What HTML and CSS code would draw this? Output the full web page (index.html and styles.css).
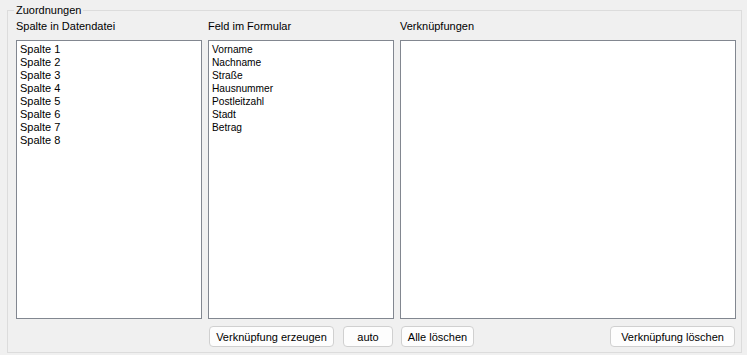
FILE: index.html
```html
<!DOCTYPE html>
<html lang="de">
<head>
  <meta charset="UTF-8" />
  <title>Zuordnungen</title>
  <link rel="stylesheet" href="styles.css">
</head>
<body>
  <!-- Mapping group box -->
  <fieldset class="group">
    <legend>Zuordnungen</legend>
    <div class="mapping">
      <div class="col-label">Spalte in Datendatei</div>
      <div class="col-label">Feld im Formular</div>
      <div class="col-label">Verknüpfungen</div>

      <ul class="listbox">
        <li>Spalte 1</li>
        <li>Spalte 2</li>
        <li>Spalte 3</li>
        <li>Spalte 4</li>
        <li>Spalte 5</li>
        <li>Spalte 6</li>
        <li>Spalte 7</li>
        <li>Spalte 8</li>
      </ul>
      <ul class="listbox narrow">
        <li>Vorname</li>
        <li>Nachname</li>
        <li>Straße</li>
        <li>Hausnummer</li>
        <li>Postleitzahl</li>
        <li>Stadt</li>
        <li>Betrag</li>
      </ul>
      <ul class="listbox"></ul>

      <div></div>
      <div class="buttons">
        <button class="btn btn-wide">Verknüpfung erzeugen</button>
        <button class="btn btn-small">auto</button>
      </div>
      <div class="buttons">
        <button class="btn btn-mid">Alle löschen</button>
        <button class="btn btn-wide">Verknüpfung löschen</button>
      </div>
    </div>
  </fieldset>
</body>
</html>
```

FILE: styles.css
```css
body {
  margin: 0;
  background-color: #f0f0f0;
  font-family: "Liberation Sans", Arial, sans-serif;
  font-size: 11px;
  color: #000;
}
/* Group box */
.group {
  margin: 4px 5px 0 7px;
  padding: 2px 5px 5px 8px;
  border: 1px solid #dcdcdc;
  min-width: 0;
}
.group legend {
  padding: 0 2px;
  margin-left: -2px;
  line-height: 13px;
}
.mapping {
  display: grid;
  grid-template-columns: 186px 186px 1fr;
  column-gap: 6px;
  row-gap: 7px;
}
.col-label {
  padding-top: 1px;
  line-height: 13px;
}
/* List boxes */
.listbox {
  list-style: none;
  margin: 0;
  padding: 2px 3px 0;
  height: 275px;
  background: #fff;
  border: 1px solid #828790;
}
.listbox li {
  line-height: 13px;
  white-space: nowrap;
}
.listbox.narrow li {
  font-size: 10.2px;
}
/* Buttons */
.buttons {
  display: flex;
  justify-content: space-between;
  padding: 0 1px;
}
.btn {
  height: 21px;
  padding: 0;
  font-family: inherit;
  font-size: 11px;
  color: #000;
  background: #fdfdfd;
  border: 1px solid #d0d0d0;
  border-radius: 4px;
}
.btn-wide {
  width: 125px;
}
.btn-small {
  width: 50px;
}
.btn-mid {
  width: 73px;
}
```
